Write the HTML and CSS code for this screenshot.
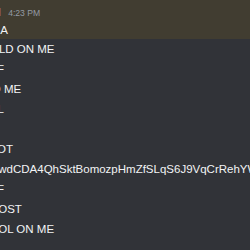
FILE: index.html
```html
<!DOCTYPE html>
<html>
<head>
<meta charset="utf-8">
<link rel="stylesheet" href="styles.css">
</head>
<body>
<main class="chat">
  <div class="message mention">
    <div class="header">
      <span class="username">KAIN</span>
      <span class="timestamp">4:23 PM</span>
    </div>
    <div class="content">MMA</div>
  </div>
  <div class="message"><div class="content">GOLD ON ME</div></div>
  <div class="message"><div class="content">OFF</div></div>
  <div class="message"><div class="content">WO ME</div></div>
  <div class="message"><div class="content">SOL</div></div>
  <div class="message"><div class="content"></div></div>
  <div class="message"><div class="content">SHOT</div></div>
  <div class="message"><div class="content">ODwdCDA4QhSktBomozpHmZfSLqS6J9VqCrRehYWkq.GxTz3n</div></div>
  <div class="message"><div class="content">OFF</div></div>
  <div class="message"><div class="content">GHOST</div></div>
  <div class="message"><div class="content">COOL ON ME</div></div>
</main>
</body>
</html>
```

FILE: styles.css
```css
html, body {
  margin: 0;
  padding: 0;
  background: #313338;
  width: 250px;
  height: 250px;
  overflow: hidden;
}

.chat {
  display: flex;
  flex-direction: column;
  width: 250px;
  height: 250px;
  overflow: hidden;
  font-family: "Liberation Sans", Arial, sans-serif;
  color: #f2f3f5;
}

.message {
  margin-left: -19px;
  padding: 2px 0;
  height: 16px;
  flex: none;
}

.message.mention {
  background: #413d31;
  height: 35px;
  padding: 2px 0;
}

.header {
  display: flex;
  align-items: baseline;
  height: 20px;
  line-height: 20px;
}

.username {
  font-size: 11.5px;
  font-weight: 700;
  color: #9d74d0;
  margin-left: -8px;
}

.timestamp {
  font-size: 8.6px;
  color: #949ba4;
  margin-left: 7px;
}

.content {
  font-size: 11.5px;
  line-height: 16px;
  white-space: nowrap;
  height: 16px;
}

.mention .content {
  height: 15px;
}
```
